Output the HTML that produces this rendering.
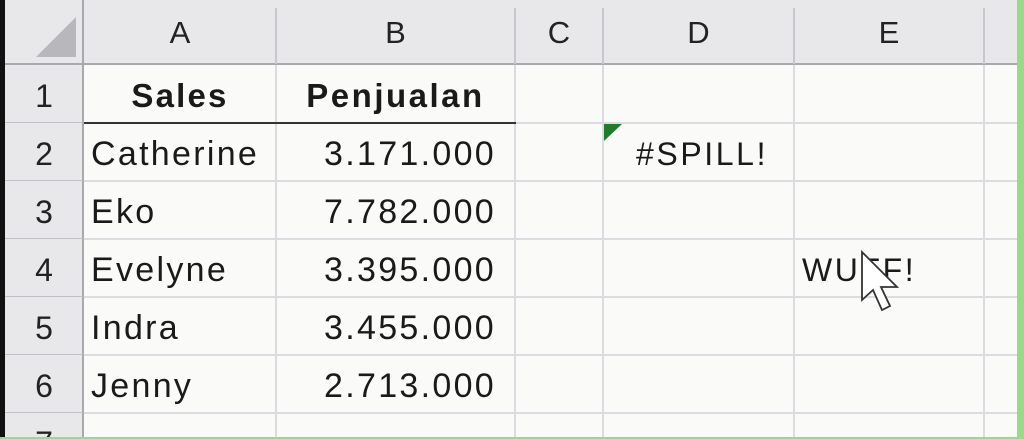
<!DOCTYPE html>
<html style="overflow:hidden;height:439px"><head><style>
body{margin:0;width:1024px;height:439px;overflow:hidden;background:#fafbf8;position:relative;font-family:"Liberation Sans",sans-serif;}
.a{position:absolute}
.t{position:absolute;font-size:34px;color:#1a1a1a;line-height:58px;white-space:nowrap;letter-spacing:2.3px}
.h{position:absolute;font-size:31px;color:#222;text-align:center;line-height:65px;top:0}
.r{position:absolute;font-size:32px;color:#222;text-align:center;left:4px;width:80px;line-height:58px;height:58px;overflow:hidden}
.vl{position:absolute;width:2px;background:#dcdce0;top:65px;height:372px}
.hl{position:absolute;height:2px;background:#dcdce0;left:84px;width:934px}
</style></head><body>
<div class="a" style="left:0;top:0;width:1024px;height:439px;overflow:hidden">
<div class="a" style="left:0;top:0;width:5px;height:439px;background:#111"></div>
<div class="a" style="left:5px;top:0;width:1012px;height:65px;background:#e8e8ea"></div>
<div class="a" style="left:5px;top:65px;width:79px;height:374px;background:#e8e8ea"></div>
<div class="a" style="left:5px;top:63px;width:1012px;height:2px;background:#a9a9ad"></div>
<div class="a" style="left:82px;top:0;width:2px;height:439px;background:#a9a9ad"></div>
<svg class="a" style="left:36px;top:17px" width="42" height="42"><polygon points="40,0 40,40 0,40" fill="#b8b8bc"/></svg>
<div class="a" style="left:275px;top:8px;width:2px;height:56px;background:#c8c8cc"></div>
<div class="a" style="left:514px;top:8px;width:2px;height:56px;background:#c8c8cc"></div>
<div class="a" style="left:602px;top:8px;width:2px;height:56px;background:#c8c8cc"></div>
<div class="a" style="left:793px;top:8px;width:2px;height:56px;background:#c8c8cc"></div>
<div class="a" style="left:983px;top:8px;width:2px;height:56px;background:#c8c8cc"></div>
<div class="h" style="left:84px;width:192px">A</div>
<div class="h" style="left:276px;width:239px">B</div>
<div class="h" style="left:515px;width:88px">C</div>
<div class="h" style="left:603px;width:191px">D</div>
<div class="h" style="left:794px;width:190px">E</div>
<div class="a" style="left:5px;top:122px;width:78px;height:1px;background:#c0c0c4"></div>
<div class="a" style="left:5px;top:180px;width:78px;height:1px;background:#c0c0c4"></div>
<div class="a" style="left:5px;top:238px;width:78px;height:1px;background:#c0c0c4"></div>
<div class="a" style="left:5px;top:296px;width:78px;height:1px;background:#c0c0c4"></div>
<div class="a" style="left:5px;top:354px;width:78px;height:1px;background:#c0c0c4"></div>
<div class="a" style="left:5px;top:412px;width:78px;height:1px;background:#c0c0c4"></div>
<div class="r" style="top:67px">1</div>
<div class="r" style="top:125px">2</div>
<div class="r" style="top:183px">3</div>
<div class="r" style="top:241px">4</div>
<div class="r" style="top:299px">5</div>
<div class="r" style="top:357px">6</div>
<div class="r" style="top:414px;height:23px">7</div>
<div class="vl" style="left:275px"></div>
<div class="vl" style="left:514px"></div>
<div class="vl" style="left:602px"></div>
<div class="vl" style="left:793px"></div>
<div class="vl" style="left:983px"></div>
<div class="hl" style="top:180px"></div>
<div class="hl" style="top:238px"></div>
<div class="hl" style="top:296px"></div>
<div class="hl" style="top:354px"></div>
<div class="hl" style="top:412px"></div>
<div class="hl" style="top:122px;left:515px"></div>
<div class="a" style="left:84px;top:122px;width:432px;height:2px;background:#333"></div>
<div class="t" style="left:84px;width:192px;text-align:center;top:67px;font-weight:bold;font-size:33px;letter-spacing:2.2px">Sales</div>
<div class="t" style="left:276px;width:239px;text-align:center;top:67px;font-weight:bold;font-size:33px;letter-spacing:2.5px">Penjualan</div>
<div class="t" style="left:91px;top:125px">Catherine</div>
<div class="t" style="left:91px;top:183px">Eko</div>
<div class="t" style="left:91px;top:241px">Evelyne</div>
<div class="t" style="left:91px;top:299px">Indra</div>
<div class="t" style="left:91px;top:357px">Jenny</div>
<div class="t" style="right:528px;top:125px">3.171.000</div>
<div class="t" style="right:528px;top:183px">7.782.000</div>
<div class="t" style="right:528px;top:241px">3.395.000</div>
<div class="t" style="right:528px;top:299px">3.455.000</div>
<div class="t" style="right:528px;top:357px">2.713.000</div>
<svg class="a" style="left:604px;top:124px" width="20" height="20"><polygon points="0,0 18,0 0,17" fill="#1e7d2a"/></svg>
<div class="t" style="left:636px;top:125px;font-size:32px;letter-spacing:2.6px">#SPILL!</div>
<div class="t" style="left:802px;top:241px;font-size:32px;letter-spacing:2.6px">WUFF!</div>
<svg class="a" style="left:858px;top:248px" width="50" height="66"><path d="M4,4 L4,52 L15,42 L24,62 L32,58 L23,39 L39,39 Z" fill="#fff" stroke="#333" stroke-width="1.8"/></svg>
<div class="a" style="left:1017px;top:0;width:7px;height:439px;background:#9ad98a"></div>
<div class="a" style="left:0;top:437px;width:1024px;height:2px;background:#9ad98a"></div>
</div>
</body></html>
